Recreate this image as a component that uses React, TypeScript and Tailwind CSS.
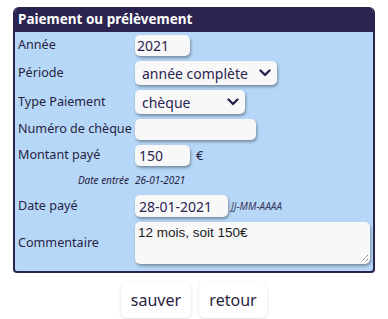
import React from "react";

const font = { fontFamily: '"Noto Sans", "Open Sans", sans-serif' };

function Chevron() {
  return (
    <svg width="12" height="8" viewBox="0 0 12 8" className="shrink-0">
      <path d="M1.5 1.5 L6 6 L10.5 1.5" fill="none" stroke="#2b2450" strokeWidth="2.4" strokeLinecap="round" strokeLinejoin="round" />
    </svg>
  );
}

const ctl =
  "bg-[#f8f8f8] rounded-[5px] shadow-[1px_2px_3px_rgba(0,0,0,0.35)] text-[#2b2450] text-[14px] flex items-center whitespace-nowrap";

function Row({ label, children, h }: { label: string; children?: React.ReactNode; h: string }) {
  return (
    <div className={`flex items-center ${h}`}>
      <div className="w-[120px] pl-[3px] text-[12.6px] text-[#27233f] shrink-0 whitespace-nowrap">{label}</div>
      {children}
    </div>
  );
}

export default function App() {
  return (
    <div className="w-[388px] h-[319px] bg-white pt-[7px]" style={font}>
      <div className="ml-[13px] w-[362px] rounded-t-[6px] rounded-b-[4px] border-2 border-t-0 border-[#2b2450] bg-[#b6d7f8] overflow-hidden">
        <div className="h-[25px] bg-[#2b2450] text-white font-bold text-[13.5px] pl-[3px] flex items-center">
          Paiement ou prélèvement
        </div>
        <div className="flex flex-col gap-[5px] pt-[3px] pb-[7px]">
          <Row label="Année" h="h-[21px]">
            <div className={`${ctl} w-[55px] h-[21px] pl-[2px]`}>2021</div>
          </Row>
          <Row label="Période" h="h-[24px]">
            <div className={`${ctl} w-[142px] h-[24px] pl-[7px] pr-[6px] justify-between`}>
              <span>année complète</span>
              <Chevron />
            </div>
          </Row>
          <Row label="Type Paiement" h="h-[24px]">
            <div className={`${ctl} w-[110px] h-[24px] pl-[7px] pr-[6px] justify-between`}>
              <span>chèque</span>
              <Chevron />
            </div>
          </Row>
          <Row label="Numéro de chèque" h="h-[21px]">
            <div className={`${ctl} w-[121px] h-[21px]`}></div>
          </Row>
          <Row label="Montant payé" h="h-[21px]">
            <div className={`${ctl} w-[55px] h-[21px] pl-[4px]`}>150</div>
            <span className="ml-[6px] text-[13px] text-[#27233f]">€</span>
          </Row>
          <div className="flex items-center h-[19px] text-[10px] italic text-[#27233f]">
            <div className="w-[114px] text-right shrink-0">Date entrée</div>
            <div className="ml-[6px]">26-01-2021</div>
          </div>
          <Row label="Date payé" h="h-[22px]">
            <div className={`${ctl} w-[93px] h-[22px] pl-[4px] text-[14px]`}>28-01-2021</div>
            <span className="ml-[3px] text-[10px] italic text-[#3d3a5c]">JJ-MM-AAAA</span>
          </Row>
          <Row label="Commentaire" h="h-[42px]">
            <div
              className="relative bg-[#f8f8f8] rounded-[5px] shadow-[1px_2px_3px_rgba(0,0,0,0.35)] w-[235px] h-[42px] pl-[3px] pt-[1px] text-[13.5px] text-[#1a1a1a]"
              style={{ fontFamily: '"Liberation Sans", Arial, sans-serif' }}
            >
              12 mois, soit 150€
              <svg width="9" height="9" viewBox="0 0 9 9" className="absolute right-[1px] bottom-[1px]">
                <path d="M8 1 L1 8 M8 5 L5 8" stroke="#555" strokeWidth="1" strokeDasharray="1 1" />
              </svg>
            </div>
          </Row>
        </div>
      </div>
      <div className="flex justify-center gap-[8px] mt-[9px]">
        <button className="w-[70px] h-[36px] bg-white rounded-[6px] shadow-[0_1px_3px_rgba(0,0,0,0.15)] text-[16px] text-[#27233f]">
          sauver
        </button>
        <button className="w-[68px] h-[36px] bg-white rounded-[6px] shadow-[0_1px_3px_rgba(0,0,0,0.15)] text-[16px] text-[#27233f]">
          retour
        </button>
      </div>
    </div>
  );
}
